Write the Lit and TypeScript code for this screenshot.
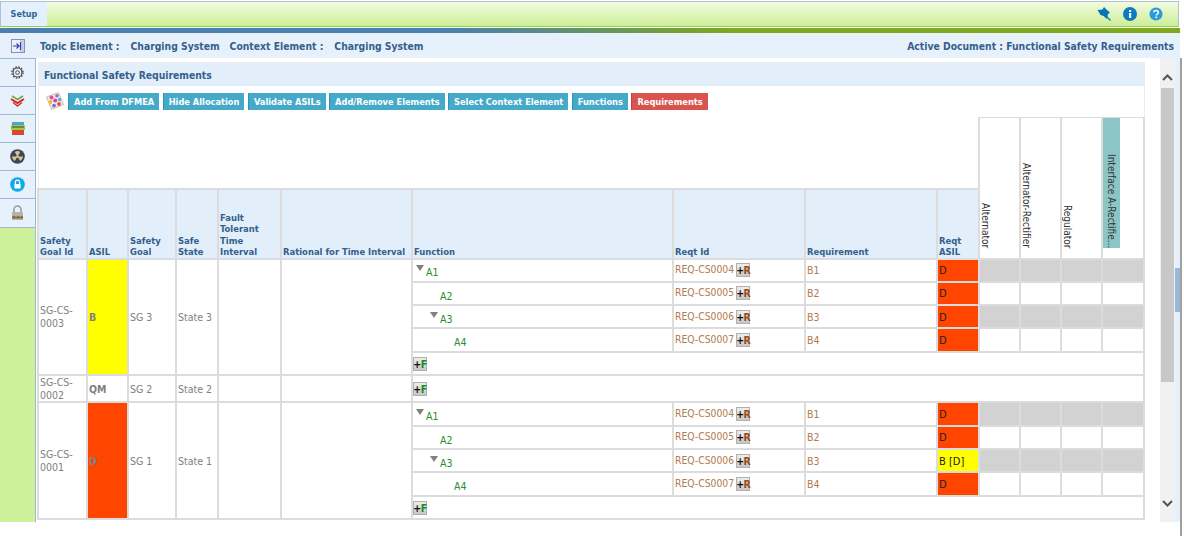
import { LitElement, html, css } from "lit";
import { customElement } from "lit/decorators.js";

const toolbar = [
  "Add From DFMEA",
  "Hide Allocation",
  "Validate ASILs",
  "Add/Remove Elements",
  "Select Context Element",
  "Functions",
];

const functionRows = [
  { name: "A1", level: 0, open: true, id: "REQ-CS0004", req: "B1", asil: "D", grey: true },
  { name: "A2", level: 1, open: false, id: "REQ-CS0005", req: "B2", asil: "D", grey: false },
  { name: "A3", level: 1, open: true, id: "REQ-CS0006", req: "B3", asil: "D", grey: true },
  { name: "A4", level: 2, open: false, id: "REQ-CS0007", req: "B4", asil: "D", grey: false },
];

const groups = [
  { id: "SG-CS-0003", asil: "B", goal: "SG 3", state: "State 3", color: "yellow", rows: functionRows },
  { id: "SG-CS-0002", asil: "QM", goal: "SG 2", state: "State 2", color: "", rows: [] },
  {
    id: "SG-CS-0001",
    asil: "D",
    goal: "SG 1",
    state: "State 1",
    color: "red",
    rows: functionRows.map((r) => (r.name === "A3" ? { ...r, asil: "B [D]" } : r)),
  },
];

const columns = [49, 41, 48, 42, 63, 131, 261, 132, 132, 42, 41, 41, 41, 42];

@customElement("app-root")
export class AppRoot extends LitElement {
  static styles = css`
    :host {
      display: block;
      width: 1184px;
      height: 536px;
      overflow: hidden;
      background: #fff;
      font-family: "DejaVu Sans Condensed", "DejaVu Sans", sans-serif;
      font-size: 10.5px;
      color: #808080;
    }
    .topbar {
      height: 24px;
      margin: 1px 5px 0 0;
      display: flex;
      align-items: stretch;
      justify-content: space-between;
      border: 1px solid #b4c0cc;
      border-bottom: 1px solid #8fd04a;
      background: linear-gradient(#f2fbe2, #cdef96);
    }
    .tab {
      width: 46px;
      display: flex;
      align-items: center;
      justify-content: center;
      background: #e4f0fb;
      color: #2f6394;
      font-weight: bold;
      font-size: 9px;
    }
    .top-icons {
      display: flex;
      align-items: center;
      gap: 12px;
      padding-right: 15px;
    }
    .stripe {
      height: 5px;
      margin: 1px 4px 0 0;
      background: linear-gradient(90deg, #4a7fb0 0%, #4a7fb0 38%, #7fa81c 62%, #7fa81c 100%);
    }
    .context {
      height: 25px;
      margin-right: 4px;
      display: flex;
      align-items: center;
      background: #e7f1fb;
      color: #33608c;
      font-weight: bold;
      font-size: 10.3px;
      padding-right: 6px;
    }
    .context .toggle {
      width: 40px;
      display: flex;
      justify-content: center;
      padding-right: 4px;
      box-sizing: border-box;
    }
    .context .pair {
      display: flex;
      gap: 11px;
      margin-right: 10px;
    }
    .context .end {
      margin-left: auto;
    }
    .body {
      height: 464px;
      display: flex;
      margin-right: 2px;
    }
    .sidebar {
      width: 35px;
      flex: none;
      background: #cdf09a;
      border-right: 1px solid #9db8d6;
    }
    .side-btn {
      height: 27px;
      display: flex;
      align-items: center;
      justify-content: center;
      background: #e7f1fb;
      border-top: 1px solid #9db8d6;
    }
    .side-btn:last-child {
      height: 28px;
      border-bottom: 1px solid #9db8d6;
    }
    .main {
      flex: 1;
      min-width: 0;
      display: flex;
      padding-left: 2px;
    }
    .panel {
      width: 1107px;
      height: 458px;
      margin-top: 4px;
      flex: none;
      box-sizing: border-box;
      border: 1px solid #ececec;
    }
    .title {
      height: 23px;
      display: flex;
      align-items: center;
      padding-left: 5px;
      background: #e2effa;
      color: #33608c;
      font-weight: bold;
      font-size: 10.3px;
    }
    .tools {
      height: 31px;
      box-sizing: border-box;
      display: flex;
      align-items: flex-start;
      gap: 3.5px;
      padding: 7px 0 0 7px;
    }
    .tools svg {
      margin: -1px 0.5px 0 0;
    }
    .tool {
      height: 17px;
      padding: 0 5px;
      display: flex;
      align-items: center;
      background: #45aac8;
      border-left: 1px solid #2f93b2;
      color: #fff;
      font-weight: bold;
      font-size: 9.2px;
      white-space: nowrap;
    }
    .tool.active {
      background: #d9534f;
      border-left-color: #c04440;
    }
    table {
      table-layout: fixed;
      border-collapse: collapse;
      width: 1106px;
      margin-left: -2px;
    }
    td,
    th {
      box-sizing: border-box;
      border: 2px solid #dcdcdc;
      padding: 0 0 0 1px;
      overflow: hidden;
    }
    .blank {
      border-top: 0;
      border-left: 0;
      height: 71px;
    }
    .head th {
      height: 70px;
      background: #e2effa;
      color: #33608c;
      font-weight: bold;
      font-size: 9.4px;
      line-height: 11.5px;
      text-align: left;
      vertical-align: bottom;
    }
    th.rot {
      background: #fff;
      padding: 0;
      vertical-align: top;
      border-top-width: 1px;
    }
    .rot div {
      width: 10px;
      height: 130px;
      writing-mode: vertical-rl;
      text-align: end;
      line-height: 10px;
      font-size: 10px;
      color: #333;
      font-weight: normal;
      white-space: nowrap;
    }
    .rot div.hit {
      width: 17px;
      line-height: 17px;
      background: #8cc5c5;
    }
    tr.body-row td {
      height: 23.33px;
      line-height: 12.5px;
    }
    tr.add td {
      height: 23.67px;
    }
    td.plain {
      padding-left: 0;
    }
    .asil {
      font-weight: bold;
    }
    .yellow {
      background: #ffff00;
    }
    .red {
      background: #ff4500;
    }
    .grey {
      background: #d2d2d2;
    }
    tr.body-row td.fn {
      color: #2e8b2e;
      padding-top: 5px;
    }
    .fn .row {
      position: relative;
    }
    .fn .tri {
      width: 0;
      height: 0;
      position: absolute;
      left: -10px;
      top: -1px;
      border: 4px solid transparent;
      border-top: 6px solid #808080;
      border-bottom: 0;
    }
    .rid {
      color: #b07c50;
      white-space: nowrap;
      font-size: 10.3px;
    }
    .req {
      color: #b07c50;
    }
    tr.body-row td.level {
      color: #222;
      font-size: 11px;
      padding-top: 2px;
    }
    .mini {
      display: inline-block;
      width: 14px;
      height: 14px;
      line-height: 14px;
      margin-left: 2px;
      text-align: center;
      font-size: 10.5px;
      font-weight: bold;
      box-sizing: border-box;
      background: linear-gradient(#f0f0f0, #c4c4c4);
      box-shadow: inset 0 0 0 1px #b0b0b0;
      color: #111;
      letter-spacing: -0.5px;
      vertical-align: middle;
    }
    .mini b.r {
      color: #9a4a10;
    }
    .mini b.f {
      color: #1d8a1d;
    }
    .mini.fbtn {
      margin: 0;
    }
    .scroll {
      width: 15px;
      height: 464px;
      margin-left: 15px;
      flex: none;
      background: #f1f1f1;
      display: flex;
      flex-direction: column;
      align-items: center;
    }
    .arrow {
      height: 30px;
      box-sizing: border-box;
      flex: none;
      display: flex;
      align-items: center;
      justify-content: center;
    }
    .arrow.up {
      padding-top: 8px;
    }
    .arrow.down {
      padding-bottom: 8px;
    }
    .thumb {
      width: 13px;
      height: 294px;
      flex: none;
      background: #c8c8c8;
    }
    .gap {
      flex: 1;
    }
    .outer {
      width: 7px;
      height: 478px;
      flex: none;
      background: linear-gradient(#e7f1fb, #e7f1fb) no-repeat;
      background-size: 100% 464px;
      border-right: 2px solid #a0a0a0;
      box-sizing: border-box;
      padding-top: 210px;
    }
    .outer div {
      width: 5px;
      height: 44px;
      background: #9ab9d8;
    }
  `;

  private mini(letter: string) {
    const f = letter === "F";
    return html`<span class="mini ${f ? "fbtn" : ""}">+<b class=${f ? "f" : "r"}>${letter}</b></span>`;
  }

  private renderFunction(r: (typeof functionRows)[number]) {
    return html`<td class="fn" style="padding-left:${13 + r.level * 14}px">
        <div class="row">${r.open ? html`<span class="tri"></span>` : ""}${r.name}</div>
      </td>
      <td class="rid"><span>${r.id}</span>${this.mini("R")}</td>
      <td class="req">${r.req}</td>
      <td class="level ${r.asil === "D" ? "red" : "yellow"}">${r.asil}</td>
      ${[0, 1, 2, 3].map(() => html`<td class=${r.grey ? "grey" : ""}></td>`)}`;
  }

  private renderGroup(g: (typeof groups)[number]) {
    const span = g.rows.length + 1;
    const first = g.rows[0];
    const lead = html`<td rowspan=${span}>${g.id}</td>
      <td rowspan=${span} class="asil ${g.color}">${g.asil}</td>
      <td rowspan=${span}>${g.goal}</td>
      <td rowspan=${span}>${g.state}</td>
      <td rowspan=${span}></td>
      <td rowspan=${span}></td>`;
    if (!first) {
      return html`<tr class="body-row">${lead}<td class="plain" colspan="8">${this.mini("F")}</td></tr>`;
    }
    return html`<tr class="body-row">${lead}${this.renderFunction(first)}</tr>
      ${g.rows.slice(1).map((r) => html`<tr class="body-row">${this.renderFunction(r)}</tr>`)}
      <tr class="add"><td class="plain" colspan="8">${this.mini("F")}</td></tr>`;
  }

  render() {
    return html`
      <div class="topbar">
        <div class="tab">Setup</div>
        <div class="top-icons">
          <svg width="14" height="14" viewBox="0 0 14 14">
            <path d="M0.5 3 L5.5 2.5 L7 0 L10 3 L13 5.5 L11 7 L10 12 L6.5 9 L3.5 8 Z" fill="#0b74b5" />
            <path d="M9 9 L13.5 13.5" stroke="#0b74b5" stroke-width="1.3" />
          </svg>
          <svg width="14" height="14" viewBox="0 0 14 14">
            <circle cx="7" cy="7" r="7" fill="#0b7cc0" />
            <rect x="6" y="3" width="2.2" height="2" fill="#fff" />
            <rect x="6" y="6" width="2.2" height="5" fill="#fff" />
          </svg>
          <svg width="14" height="14" viewBox="0 0 15 15">
            <circle cx="7.5" cy="7.5" r="7" fill="#2b9ad8" />
            <path d="M5.2 5.6 C5.4 3 10 3 10 5.8 C10 7.6 7.8 7.4 7.8 9.2" fill="none" stroke="#fff" stroke-width="1.6" />
            <rect x="6.9" y="10.2" width="1.8" height="1.8" fill="#fff" />
          </svg>
        </div>
      </div>
      <div class="stripe"></div>
      <div class="context">
        <div class="toggle">
          <svg width="14" height="14" viewBox="0 0 14 14">
            <rect x="0.5" y="0.5" width="13" height="13" fill="#eef0f8" stroke="#8a8fb8" />
            <rect x="9" y="1" width="4" height="12" fill="#c9cdea" />
            <path d="M2 7 H8 M5.5 4.5 L8 7 L5.5 9.5 M9.5 3 V11" fill="none" stroke="#2a3fb0" stroke-width="1.2" />
          </svg>
        </div>
        <div class="pair"><span>Topic Element :</span><span>Charging System</span></div>
        <div class="pair"><span>Context Element :</span><span>Charging System</span></div>
        <div class="end">Active Document : Functional Safety Requirements</div>
      </div>
      <div class="body">
        <div class="sidebar">
          <div class="side-btn">
            <svg width="13" height="13" viewBox="0 0 14 14">
              <circle cx="7" cy="7" r="4.8" fill="none" stroke="#444" stroke-width="1.2" />
              <circle cx="7" cy="7" r="6" fill="none" stroke="#444" stroke-width="1.4" stroke-dasharray="1.7 1.45" />
              <circle cx="7" cy="7" r="2" fill="none" stroke="#444" />
            </svg>
          </div>
          <div class="side-btn">
            <svg width="15" height="12" viewBox="0 0 15 12">
              <path d="M2 1 L7.5 4.5 L13 1" fill="none" stroke="#6aa84f" stroke-width="1.6" />
              <path d="M1 4 L7.5 8 L14 4" fill="none" stroke="#d22" stroke-width="2" />
              <path d="M3 7.5 L7.5 11 L12 7.5" fill="none" stroke="#c33" stroke-width="1.5" />
            </svg>
          </div>
          <div class="side-btn">
            <svg width="14" height="15" viewBox="0 0 14 15">
              <rect x="1" y="1" width="12" height="3" fill="#4aa3d8" />
              <rect x="0" y="4" width="14" height="5" fill="#9ccc3c" />
              <rect x="1" y="5.5" width="12" height="1" fill="#444" />
              <rect x="1" y="9" width="12" height="5" fill="#d9453a" />
            </svg>
          </div>
          <div class="side-btn">
            <svg width="15" height="15" viewBox="0 0 15 15">
              <circle cx="7.5" cy="7.5" r="7.3" fill="#3e4654" />
              <path d="M7.5 7.5 L4.8 2.9 A5.4 5.4 0 0 1 10.2 2.9 Z M7.5 7.5 L13 7.5 A5.4 5.4 0 0 1 10.2 12.1 Z M7.5 7.5 L4.8 12.1 A5.4 5.4 0 0 1 2 7.5 Z" fill="#d8c49a" />
              <circle cx="7.5" cy="7.5" r="1.3" fill="#d8c49a" />
            </svg>
          </div>
          <div class="side-btn">
            <svg width="15" height="15" viewBox="0 0 15 15">
              <circle cx="7.5" cy="7.5" r="7.3" fill="#10a8ee" />
              <path d="M5.4 7 V5.3 A2.1 2.1 0 0 1 9.6 5.3 V7" fill="none" stroke="#fff" stroke-width="1.2" />
              <rect x="4.4" y="7" width="6.2" height="4.6" rx="0.5" fill="#fff" />
            </svg>
          </div>
          <div class="side-btn">
            <svg width="13" height="16" viewBox="0 0 13 16">
              <path d="M3 7 V4.5 A3.5 3.5 0 0 1 10 4.5 V7" fill="none" stroke="#9a9a9a" stroke-width="1.6" />
              <rect x="1" y="7" width="11" height="8" fill="#b4b4b4" />
              <path d="M1 12 L3 10.5 L5 12 L7 10.5 L9 12 L11 10.5 L12 12 V13.5 H1 Z" fill="#8a6a20" />
            </svg>
          </div>
        </div>
        <div class="main">
          <div class="panel">
            <div class="title">Functional Safety Requirements</div>
            <div class="tools">
              <svg width="18" height="18" viewBox="0 0 18 18">
                <path d="M0.5 5 L12.5 0.5 L17.5 12.5 L5.5 17.5 Z" fill="#f4ecd8" stroke="#b0a898" stroke-width="0.7" />
                <circle cx="5.5" cy="5.5" r="2" fill="#e04ca0" />
                <circle cx="11" cy="3.8" r="1.8" fill="#9a6adf" />
                <circle cx="4.5" cy="10" r="1.9" fill="#e8c030" />
                <circle cx="9.2" cy="8.6" r="2" fill="#d040d0" />
                <circle cx="13.6" cy="7.6" r="1.8" fill="#60b0e0" />
                <circle cx="8" cy="13.6" r="1.9" fill="#7070e0" />
                <circle cx="13" cy="12" r="1.9" fill="#e05050" />
              </svg>
              ${toolbar.map((t) => html`<div class="tool">${t}</div>`)}
              <div class="tool active">Requirements</div>
            </div>
            <table>
              <colgroup>${columns.map((w) => html`<col style="width:${w}px" />`)}</colgroup>
              <tr>
                <td class="blank" colspan="10"></td>
                <th class="rot" rowspan="2"><div>Alternator</div></th>
                <th class="rot" rowspan="2"><div>Alternator-Rectifier</div></th>
                <th class="rot" rowspan="2"><div>Regulator</div></th>
                <th class="rot" rowspan="2"><div class="hit">Interface A-Rectifie...</div></th>
              </tr>
              <tr class="head">
                <th>Safety Goal Id</th>
                <th>ASIL</th>
                <th>Safety Goal</th>
                <th>Safe State</th>
                <th>Fault Tolerant Time Interval</th>
                <th>Rational for Time Interval</th>
                <th>Function</th>
                <th>Reqt Id</th>
                <th>Requirement</th>
                <th>Reqt ASIL</th>
              </tr>
              ${groups.map((g) => this.renderGroup(g))}
            </table>
          </div>
          <div class="scroll">
            <div class="arrow up">
              <svg width="11" height="7" viewBox="0 0 11 7"><path d="M1 6 L5.5 1.5 L10 6" fill="none" stroke="#555" stroke-width="2" /></svg>
            </div>
            <div class="thumb"></div>
            <div class="gap"></div>
            <div class="arrow down">
              <svg width="11" height="7" viewBox="0 0 11 7"><path d="M1 1 L5.5 5.5 L10 1" fill="none" stroke="#555" stroke-width="2" /></svg>
            </div>
          </div>
          <div class="outer"><div></div></div>
        </div>
      </div>
    `;
  }
}
